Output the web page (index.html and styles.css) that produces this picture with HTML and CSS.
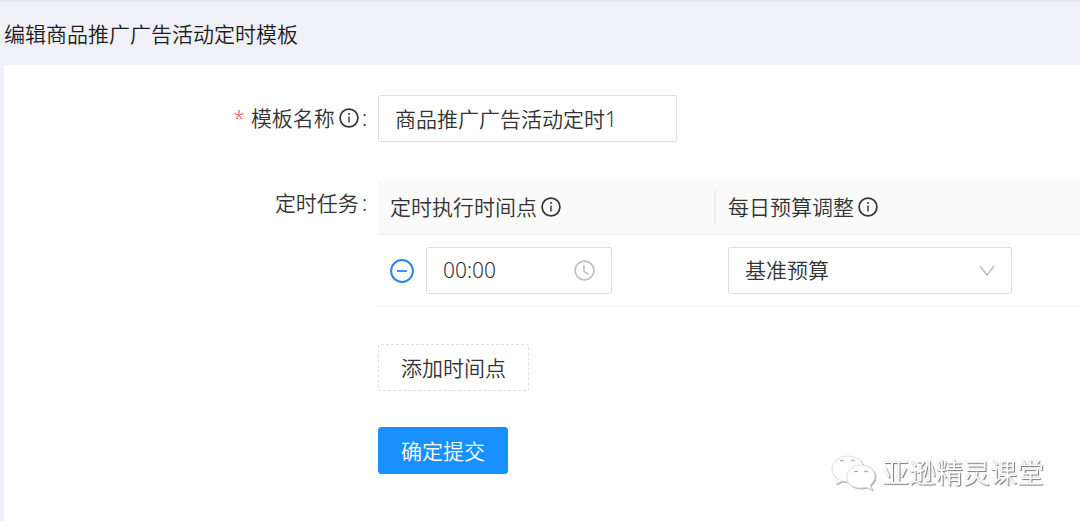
FILE: index.html
```html
<!DOCTYPE html>
<html lang="zh-CN">
<head>
  <meta charset="UTF-8" />
  <meta name="viewport" content="width=device-width, initial-scale=1" />
  <title>编辑商品推广广告活动定时模板</title>
  <link rel="stylesheet" href="styles.css">
</head>
<body>

<svg class="sprite" aria-hidden="true">
  <symbol id="icon-info" viewBox="0 0 20 20">
    <circle cx="10" cy="10" r="8.9" fill="none" stroke="currentColor" stroke-width="1.7"/>
    <path d="M10 8.6v6" fill="none" stroke="currentColor" stroke-width="1.4"/>
    <circle cx="10" cy="6" r="1" fill="currentColor"/>
  </symbol>
</svg>

<header class="page-header">
  <h1>编辑商品推广广告活动定时模板</h1>
</header>

<main class="content">
  <form id="templateForm">
    <div class="form-row">
      <label class="form-label" for="templateName"><span class="required">*</span>模板名称<svg class="info"><use href="#icon-info"/></svg><span class="colon">:</span></label>
      <div class="form-control">
        <input class="name-input" type="text" id="templateName" name="templateName" value="商品推广广告活动定时1" required />
      </div>
    </div>

    <div class="form-row task-row">
      <div class="form-label" id="taskLabel">定时任务<span class="colon">:</span></div>
      <div class="form-control">
        <table class="task-table" aria-labelledby="taskLabel">
          <thead>
            <tr>
              <th class="time-col"><div class="head-cell">定时执行时间点<svg class="info"><use href="#icon-info"/></svg></div></th>
              <th><div class="head-cell">每日预算调整<svg class="info"><use href="#icon-info"/></svg></div></th>
            </tr>
          </thead>
          <tbody>
            <tr>
              <td>
                <div class="time-cell">
                  <button type="button" class="remove-btn" aria-label="删除时间点">
                    <svg viewBox="0 0 24 24">
                      <circle cx="12" cy="12" r="10.9" fill="none" stroke="currentColor" stroke-width="2"/>
                      <path d="M7 12h10" stroke="currentColor" stroke-width="1.8"/>
                    </svg>
                  </button>
                  <div class="time-picker">
                    <input type="text" name="time" value="00:00" aria-label="定时执行时间点" />
                    <svg class="clock" viewBox="0 0 20 20">
                      <circle cx="10" cy="10" r="9" fill="none" stroke="currentColor" stroke-width="1.6"/>
                      <path d="M9.5 4.8v6l4.2 3" fill="none" stroke="currentColor" stroke-width="1.5"/>
                    </svg>
                  </div>
                </div>
              </td>
              <td>
                <div class="select-box">
                  <select name="budget" aria-label="每日预算调整">
                    <option selected>基准预算</option>
                  </select>
                  <svg class="arrow" viewBox="0 0 16 12">
                    <path d="M1 1l7 9 7-9" fill="none" stroke="currentColor" stroke-width="1.5"/>
                  </svg>
                </div>
              </td>
            </tr>
          </tbody>
        </table>
        <button type="button" class="btn btn-dashed">添加时间点</button>
        <button type="submit" class="btn btn-primary">确定提交</button>
      </div>
    </div>
  </form>
</main>

<div class="watermark">
  <svg viewBox="0 0 46 36">
    <path d="M17 1C8 1 1 7 1 14c0 4 2 7 6 10l-2 5 6-3 6 1h3C32 27 33 20 33 14 33 7 26 1 17 1z"/>
    <path d="M30 10c-8 0-14 5-14 12s6 11 14 11l5-1 6 3-2-5c3-2 5-5 5-9 0-6-6-11-14-11z"/>
    <path class="eyes" d="M9 6q2-2 4 0M20 6q2-2 4 0M23 17q2-2 4 0M33 17q2-2 4 0"/>
  </svg>
  <span>亚逊精灵课堂</span>
</div>

</body>
</html>
```
FILE: styles.css
```css
* {
  box-sizing: border-box;
}
body {
  margin: 0;
  min-height: 100vh;
  display: flex;
  flex-direction: column;
  background: #f0f1f6;
  color: #333;
  font-family: "Noto Sans", "Noto Sans CJK SC", sans-serif;
  font-size: 21px;
  font-weight: 350;
  line-height: 32px;
  overflow-x: hidden;
}
input, select, button {
  font: inherit;
  color: inherit;
}
.sprite {
  position: absolute;
  width: 0;
  height: 0;
}
.page-header {
  border-top: 2px solid #e6e7ec;
  padding: 16px 4px 15px;
}
.page-header h1 {
  margin: 0;
  color: #1c1c20;
  font-size: 21px;
  font-weight: 350;
}
.content {
  flex: 1;
  margin-left: 4px;
  padding: 30px 0;
  background: #fefefe;
}
.form-row {
  display: flex;
}
.task-row {
  margin-top: 38px;
}
.form-label {
  flex: 0 0 374px;
  display: flex;
  align-items: center;
  justify-content: flex-end;
  height: 46px;
  padding-right: 11px;
}
.required {
  margin-right: 6px;
  color: #ff5a5f;
}
.colon {
  margin-left: 3px;
}
.info {
  width: 20px;
  height: 20px;
  margin-left: 4px;
}
.form-control {
  flex: 1;
  min-width: 0;
}
input, select {
  display: block;
  width: 100%;
  height: 47px;
  padding: 0 16px 2px;
  border: 1px solid #dedede;
  border-radius: 2px;
  background: #fff;
}
.name-input {
  width: 299px;
}
.task-table {
  width: 100%;
  border-collapse: collapse;
  table-layout: fixed;
}
.task-table th {
  padding: 10px 0;
  border-bottom: 1px solid #f0f0f0;
  background: #fafafa;
  font-weight: 350;
}
.time-col {
  width: 338px;
}
.head-cell {
  display: flex;
  align-items: center;
  height: 34px;
  padding-left: 12px;
}
.time-col .head-cell {
  border-right: 2px solid #f0f0f0;
}
.task-table td {
  padding: 12px;
  border-bottom: 1px solid #f2f2f2;
}
.time-cell {
  display: flex;
  align-items: center;
  gap: 12px;
}
.remove-btn {
  width: 24px;
  height: 24px;
  padding: 0;
  border: none;
  background: none;
  color: #2f86e8;
  cursor: pointer;
}
.remove-btn svg {
  display: block;
}
.time-picker {
  position: relative;
  width: 186px;
}
.clock {
  position: absolute;
  top: 13px;
  right: 17px;
  width: 21px;
  height: 21px;
  color: #bfbfbf;
}
.select-box {
  position: relative;
  width: 284px;
}
.select-box select {
  appearance: none;
}
.arrow {
  position: absolute;
  top: 18px;
  right: 17px;
  width: 16px;
  height: 12px;
  color: #bfbfbf;
  pointer-events: none;
}
.btn {
  display: block;
  height: 47px;
  margin-top: 37px;
  padding: 0 22px;
  border-radius: 3px;
  cursor: pointer;
}
.btn-dashed {
  border: 1px dashed #dedede;
  background: #fff;
}
.btn-primary {
  margin-top: 36px;
  border: 1px solid #1890ff;
  background: #1890ff;
  color: #fff;
}
.watermark {
  position: fixed;
  right: 36px;
  bottom: 29px;
  display: flex;
  align-items: center;
  gap: 5px;
  color: #fff;
  font-size: 27px;
  line-height: 38px;
  text-shadow: 1px 1px 1px #777, 0 0 1px #aaa;
}
.watermark svg {
  width: 46px;
  height: 36px;
  fill: #fff;
  stroke: #ddd;
  stroke-width: 1;
  filter: drop-shadow(1px 1px 0 #aaa);
}
.watermark .eyes {
  fill: none;
  stroke: #999;
}
```
